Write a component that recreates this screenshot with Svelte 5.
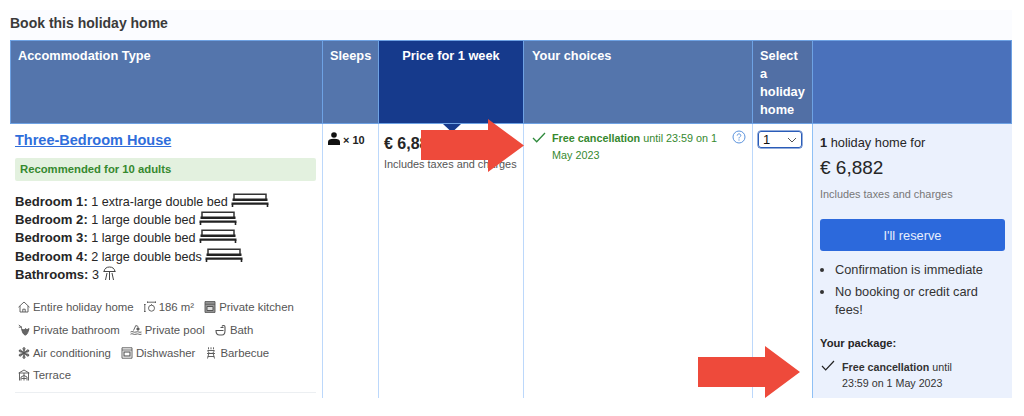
<script>
	const beds = [
		{ label: 'Bedroom 1:', text: '1 extra-large double bed' },
		{ label: 'Bedroom 2:', text: '1 large double bed' },
		{ label: 'Bedroom 3:', text: '1 large double bed' },
		{ label: 'Bedroom 4:', text: '2 large double beds' }
	];

	const facilities = [
		[
			{ name: 'Entire holiday home', icon: 'home' },
			{ name: '186 m²', icon: 'size' },
			{ name: 'Private kitchen', icon: 'kitchen' }
		],
		[
			{ name: 'Private bathroom', icon: 'bathroom' },
			{ name: 'Private pool', icon: 'pool' },
			{ name: 'Bath', icon: 'bath' }
		],
		[
			{ name: 'Air conditioning', icon: 'snow' },
			{ name: 'Dishwasher', icon: 'dish' },
			{ name: 'Barbecue', icon: 'bbq' }
		],
		[{ name: 'Terrace', icon: 'terrace' }]
	];
</script>

{#snippet bed()}
	<svg class="bed" width="38" height="14" viewBox="0 0 38 14">
		<path d="M3 6V1.200h32V6" fill="none" stroke="#333" stroke-width="1.500" />
		<path d="M1.500 5.500h35v2.500h-35zM.5 9.500h37v2.200H.5z" fill="#222" />
		<path d="M1.500 11v3M36.500 11v3" stroke="#222" stroke-width="1.600" />
	</svg>
{/snippet}

{#snippet facilityIcon(kind)}
	<svg class="ficon" width="12" height="12" viewBox="0 0 12 12" fill="none" stroke="#555" stroke-width="0.9">
		{#if kind === 'home'}
			<path d="M.5 6.200 6 1l5.500 5.200M2 5v6h8V5M4.800 11V8.200h2.400V11" />
		{:else if kind === 'size'}
			<path d="M.8 3v8M0 3.500h1.600M0 10.500h1.600M3.500 1.200h8M3.500.4v1.600M11.500.4v1.600" />
			<circle cx="7.500" cy="7.200" r="3" />
			<path d="M7.500 4.200v-1" />
		{:else if kind === 'kitchen'}
			<path d="M1 .6h10v10.800H1z" fill="#999" />
			<path d="M1 3.200h10" />
			<path d="M3 5.500h6v4H3z" fill="#ddd" stroke-width="1" />
		{:else if kind === 'bathroom'}
			<path d="M.8 1 4 3.500M.8 3.200H4" />
			<path d="M3.500 4.500c.8 4 2 6 3.500 6.500s3-2 4-6.500c-1.500 1.500-2.800 1.200-3.500 0-.8 1.500-2.500 1.800-4 0z" fill="#666" />
		{:else if kind === 'pool'}
			<path d="M3.500 6.500 5.800 1.500l2.500 1M.5 8c2-1.500 3 1 5.500 0s3 1 5.500 0M.5 10.200c2-1.500 3 1 5.500 0s3 1 5.500 0" />
			<circle cx="8" cy="5" r="1.200" fill="#666" />
		{:else if kind === 'bath'}
			<path d="M.5 6.500h8M1 6.500c0 3 1.500 4.500 3.500 4.500H7c1.500 0 3-1.500 3-4.500V3c0-2-2.500-2-3-.5M5.500 3.500h3" stroke-width="1.100" />
		{:else if kind === 'snow'}
			<path d="M6 .5v11M1.200 3.200l9.600 5.600M1.200 8.800l9.600-5.600" stroke-width="1.100" />
			<circle cx="6" cy="6" r="2.200" />
			<circle cx="6" cy="1.800" r="1.100" />
			<circle cx="6" cy="10.200" r="1.100" />
			<circle cx="2.300" cy="3.900" r="1.100" />
			<circle cx="9.700" cy="3.900" r="1.100" />
			<circle cx="2.300" cy="8.100" r="1.100" />
			<circle cx="9.700" cy="8.100" r="1.100" />
		{:else if kind === 'dish'}
			<path d="M1 .8h10v10.400H1zM1 3h10" />
			<rect x="3" y="5" width="6" height="4" stroke-width="1.100" />
		{:else if kind === 'bbq'}
			<path d="M3.500.3v2M6 .3v2M8.500.3v2M2.500 3.500h7M3 3.500c0 2 1 3 3 3s3-1 3-3M2 6.500h8M3.800 6.500 2.500 11.500M8.200 6.500l1.300 5M2.800 9.500h6.400" />
		{:else}
			<path d="M.8 4 6 1l5.200 3zM1.500 4v7.500M10.500 4v7.500M3 11.500V8l3-1.500L9 8v3.500M6 4v7.500M3.500 9.500h5" />
		{/if}
	</svg>
{/snippet}

<main>
	<h2>Book this holiday home</h2>

	<div class="table">
		<div class="th">Accommodation Type</div>
		<div class="th">Sleeps</div>
		<div class="th price-head">Price for 1 week</div>
		<div class="th choices-head">Your choices</div>
		<div class="th select-head">Select a holiday home</div>
		<div class="th reserve-head"></div>

		<div class="td type">
			<a href="#house">Three-Bedroom House</a>
			<div class="recommend">Recommended for 10 adults</div>
			<ul class="beds">
				{#each beds as b}
					<li><b>{b.label}</b> {b.text} {@render bed()}</li>
				{/each}
				<li>
					<b>Bathrooms:</b> 3
					<svg class="shower" width="13" height="14" viewBox="0 0 13 14" fill="none" stroke="#444" stroke-width="1">
						<path d="M1 5.500C1.500 2.500 3.500 1 6.500 1s5 1.500 5.500 4.500zM.5 5.500h12M6.500 5.500V14M4 7l-1.500 7M9 7l1.500 7" />
					</svg>
				</li>
			</ul>
			<div class="facilities">
				{#each facilities as row}
					<div class="frow">
						{#each row as f}
							<span class="facility">{@render facilityIcon(f.icon)}{f.name}</span>
						{/each}
					</div>
				{/each}
			</div>
			<hr />
		</div>

		<div class="td sleeps">
			<svg width="14" height="14" viewBox="0 0 14 14" fill="#111">
				<circle cx="7" cy="3" r="2.800" />
				<path d="M1 13v-3C1 8 3 6.800 7 6.800s6 1.200 6 3.200v3z" />
			</svg>
			<span>× 10</span>
		</div>

		<div class="td price">
			<div class="amount">€ 6,882</div>
			<div class="taxes">Includes taxes and charges</div>
		</div>

		<div class="td choices">
			<svg class="check" width="14" height="11" viewBox="0 0 14 11" fill="none" stroke="#2f8a3c" stroke-width="1.300">
				<path d="M1 6l3.700 3.800L13 1" />
			</svg>
			<p><b>Free cancellation</b> until 23:59 on 1 May 2023</p>
			<svg class="help" width="14" height="14" viewBox="0 0 14 14" fill="none" stroke="#5b93dd">
				<circle cx="7" cy="7" r="6" />
				<path d="M5.200 5.600C5.300 4.400 6 3.900 7 3.900s1.800.6 1.800 1.600C8.800 6.800 7 6.800 7 8.400M7 9.400v1.200" />
			</svg>
		</div>

		<div class="td select">
			<div class="fake-select">
				<span>1</span>
				<svg width="10" height="6" viewBox="0 0 10 6" fill="none" stroke="#555"><path d="M1 1l4 4 4-4" /></svg>
			</div>
		</div>

		<div class="td reserve">
			<div class="count"><b>1</b> holiday home for</div>
			<div class="total">€ 6,882</div>
			<div class="total-taxes">Includes taxes and charges</div>
			<button type="button">I'll reserve</button>
			<ul class="perks">
				<li>Confirmation is immediate</li>
				<li>No booking or credit card fees!</li>
			</ul>
			<div class="package-title">Your package:</div>
			<div class="package">
				<svg width="14" height="11" viewBox="0 0 14 11" fill="none" stroke="#222" stroke-width="1.200">
					<path d="M1 6l3.700 3.800L13 1" />
				</svg>
				<p><b>Free cancellation</b> until 23:59 on 1 May 2023</p>
			</div>
		</div>
	</div>

	<svg class="notch" width="18" height="7" viewBox="0 0 18 7"><path d="M0 0h18l-7 6.500h-4z" fill="#163a8c" /></svg>
	<svg class="arrow one" width="103" height="53" viewBox="0 0 103 53"><path d="M0 11h67V0l36 26.500L67 53V41H0z" /></svg>
	<svg class="arrow two" width="102" height="52" viewBox="0 0 102 52"><path d="M0 11h67V0l35 26L67 52V41H0z" /></svg>
</main>

<style>
	:global(body) {
		margin: 0;
		background: #fff;
	}

	main {
		position: relative;
		width: 1024px;
		height: 416px;
		overflow: hidden;
		box-sizing: border-box;
		padding: 10px 12px 0 10px;
		font-family: 'Liberation Sans', Arial, sans-serif;
		color: #262626;
	}

	h2 {
		margin: 0;
		height: 30px;
		padding-top: 4px;
		box-sizing: border-box;
		background: #fbfcff;
		font-size: 14px;
		line-height: 18px;
		color: #3a3a3a;
	}

	.table {
		display: grid;
		grid-template-columns: 313px 56px 145px 229px 60px 199px;
		grid-template-rows: 84px 274px;
		font-size: 13px;
	}

	.th {
		box-sizing: border-box;
		padding: 6px 7px;
		background: #5475ac;
		border: solid #6ea2e4;
		border-width: 1px 1px 1px 0;
		color: #fff;
		font-size: 12.800px;
		font-weight: bold;
		line-height: 18px;
	}

	.th:first-child {
		border-left-width: 1px;
	}

	.price-head {
		background: #163a8c;
		text-align: center;
	}

	.choices-head {
		padding-left: 8px;
	}

	.select-head {
		background: #516fa5;
	}

	.reserve-head {
		background: #4a71bb;
	}

	.td {
		box-sizing: border-box;
		border-right: 1px solid #bcd8fb;
		min-width: 0;
	}

	.type {
		padding: 7px 6px 0 5px;
	}

	.type a {
		display: block;
		color: #2f6edb;
		font-size: 14.500px;
		font-weight: bold;
		line-height: 18px;
	}

	.recommend {
		margin-top: 9px;
		height: 23px;
		background: #e3f1df;
		border-radius: 2px;
		padding-left: 5px;
		color: #36892f;
		font-size: 11.300px;
		font-weight: bold;
		line-height: 23px;
	}

	.beds {
		list-style: none;
		margin: 12px 0 0;
		padding: 0;
		font-size: 12.600px;
		line-height: 18.200px;
	}

	.beds b {
		font-size: 13.100px;
	}

	.beds li {
		height: 18.200px;
		white-space: nowrap;
	}

	.bed {
		vertical-align: -1px;
	}

	.shower {
		vertical-align: -1px;
	}

	.facilities {
		margin-top: 12px;
		padding-left: 3px;
		color: #555;
		font-size: 11.400px;
	}

	.frow {
		display: flex;
		gap: 10px;
		height: 22.700px;
		align-items: center;
	}

	.facility {
		display: flex;
		align-items: center;
		gap: 3px;
		white-space: nowrap;
	}

	hr {
		margin: 5px 0 0;
		border: 0;
		border-top: 1px solid #eceff2;
	}

	.sleeps {
		display: flex;
		align-items: flex-start;
		gap: 2px;
		padding: 8px 0 0 4px;
		font-size: 11px;
		font-weight: bold;
		line-height: 16px;
		color: #222;
	}

	.price {
		padding: 11px 0 0 5px;
	}

	.amount {
		font-size: 16px;
		font-weight: bold;
		line-height: 18px;
	}

	.taxes {
		margin-top: 5px;
		color: #555;
		font-size: 10.900px;
		white-space: nowrap;
	}

	.choices {
		display: flex;
		align-items: flex-start;
		padding: 6px 4px 0 8px;
		color: #36892f;
		font-size: 10.800px;
		line-height: 16.500px;
	}

	.check {
		flex: none;
		margin: 2px 6px 0 0;
	}

	.choices p {
		margin: 0;
		width: 179px;
	}

	.help {
		flex: none;
		margin-left: 1px;
	}

	.select {
		padding: 7px 0 0 5px;
	}

	.fake-select {
		display: flex;
		align-items: center;
		justify-content: space-between;
		box-sizing: border-box;
		width: 44px;
		height: 17px;
		padding: 0 4px;
		border: 1px solid #2a5cb8;
		border-radius: 3px;
		box-shadow: 0 0 0 0.500px #2a5cb8;
		font-size: 13px;
		color: #111;
	}

	.reserve {
		padding: 11px 7px 0 7px;
		background: #ebf1fd;
		border-left: 1px solid #8fc0f5;
		border-right: 0;
		margin-left: -1px;
		font-size: 12.800px;
	}

	.count {
		line-height: 16px;
	}

	.total {
		margin-top: 6px;
		font-size: 19px;
		line-height: 22px;
	}

	.total-taxes {
		margin-top: 8px;
		color: #777;
		font-size: 10.900px;
		line-height: 14px;
	}

	button {
		display: block;
		width: 185px;
		height: 32px;
		margin-top: 18px;
		border: 0;
		border-radius: 3px;
		background: #2c69dc;
		color: #e8effc;
		font: 12.800px 'Liberation Sans', Arial, sans-serif;
	}

	.perks {
		margin: 10px 0 0;
		padding: 0 0 0 15px;
		line-height: 18px;
		color: #333;
	}

	.perks li + li {
		margin-top: 4px;
	}

	.package-title {
		margin-top: 17px;
		font-size: 11.200px;
		font-weight: bold;
		line-height: 14px;
	}

	.package {
		display: flex;
		align-items: flex-start;
		gap: 7px;
		margin-top: 9px;
		padding-left: 1px;
		font-size: 10.700px;
		line-height: 16px;
		color: #333;
	}

	.package svg {
		flex: none;
		margin-top: 1px;
	}

	.package p {
		margin: 0;
		width: 130px;
	}

	.notch {
		position: absolute;
		left: 443px;
		top: 124px;
	}

	.arrow {
		position: absolute;
		fill: #ee4a3b;
	}

	.arrow.one {
		left: 421px;
		top: 119px;
	}

	.arrow.two {
		left: 698px;
		top: 346px;
	}
</style>
